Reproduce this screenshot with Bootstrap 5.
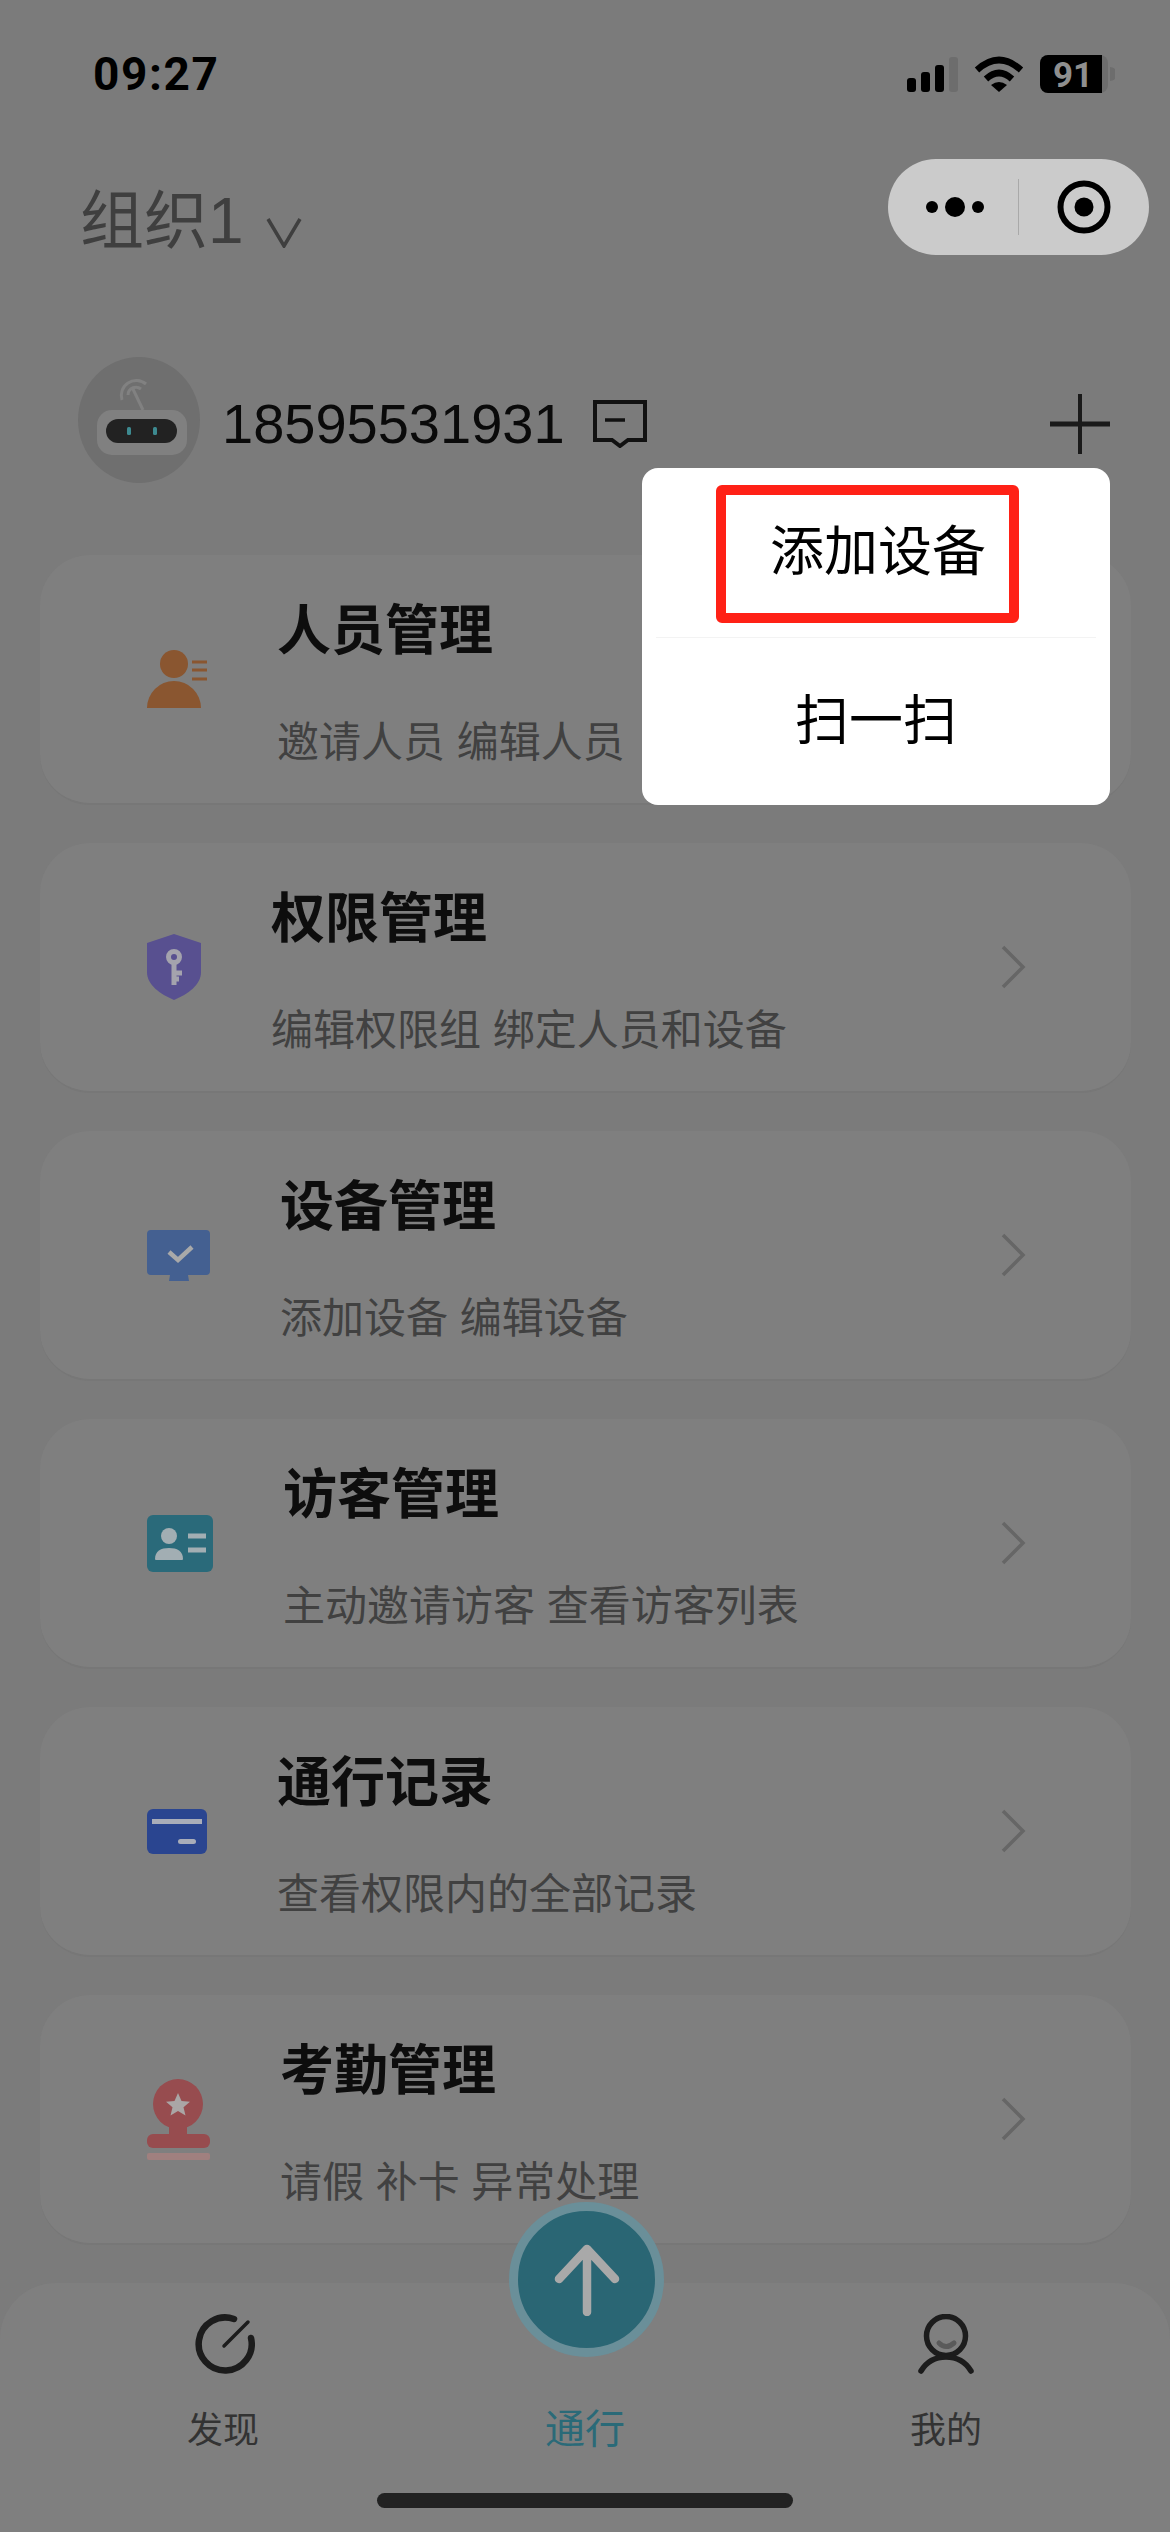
<!DOCTYPE html>
<html lang="zh-CN">
<head>
    <meta charset="UTF-8">
    <meta name="viewport" content="width=device-width, initial-scale=1.0">
    <title>通行</title>
    <link rel="stylesheet" href="https://cdn.jsdelivr.net/npm/bootstrap@5.3.0/dist/css/bootstrap.min.css">
    <style>
        html, body { width: 1170px; height: 2532px; overflow: hidden; }
        body {
            position: relative;
            background: #7b7b7b;
            color: #0a0a0a;
            font-family: "Liberation Sans", "Noto Sans CJK SC", sans-serif;
        }
        .status-row { height: 150px; padding: 51px 55px 0 93px; }
        .status-time { font: 700 46px/46px "Roboto", "Liberation Sans", sans-serif; letter-spacing: 1.6px; color: #000; }
        .status-icons { margin-top: -4px; }
        .org-row { height: 212px; padding: 9px 21px 0 80px; }
        .org-name { font-size: 64px; line-height: 96px; color: #3f3f3f; padding-top: 14px; }
        .org-caret { margin-left: 22px; margin-top: 22px; }
        .capsule { width: 261px; height: 96px; border-radius: 48px; background: #cbcbcb; }
        .capsule-half { width: 130px; }
        .capsule-line { width: 1px; height: 56px; background: #a9a9a9; }
        .profile-row { height: 124px; padding: 0 60px 0 78px; }
        .avatar-disc { width: 122px; height: 126px; border-radius: 50%; background: #6f6f6f; flex: none; margin-bottom: 8px; }
        .phone-text { font-size: 56px; margin-left: 22px; margin-right: 28px; }
        .menu-stack { padding: 69px 39px 0 40px; gap: 38px; }
        .menu-card {
            height: 250px;
            background: #7f7f7f;
            border-radius: 50px;
            border-bottom: 2px solid #777;
            padding: 0 105px 0 107px;
        }
        .menu-icon { flex: none; margin-right: 70px; display: block; }
        .menu-text { padding-top: 12px; }
        .menu-title { font-size: 54px; line-height: 60px; font-weight: 700; color: #0d0d0d; margin-top: -2px; }
        .menu-sub { font-size: 42px; line-height: 50px; color: #414141; margin-top: 57px; }
        .popup-menu {
            position: absolute; left: 642px; top: 468px;
            width: 468px; height: 337px;
            background: #fff; border-radius: 16px;
            font-size: 54px; color: #000;
        }
        .popup-first { height: 169px; }
        .popup-second { height: 168px; border-top: 1px solid #f3f3f3; margin: 0 14px; }
        .red-frame {
            position: absolute; left: 74px; top: 17px;
            width: 303px; height: 138px;
            border: 10px solid #ff2116; border-radius: 6px;
        }
        .tab-bar {
            position: absolute; left: 0; right: 0; top: 2283px; bottom: 0;
            background: #7f7f7f; border-radius: 56px 56px 0 0;
            padding: 31px 188px 0 187px;
        }
        .tab-cell { width: 72px; }
        .tab-text { font-size: 36px; line-height: 44px; color: #333; margin-top: 35px; white-space: nowrap; }
        .tab-icon { display: block; }
        .tab-shift { margin-left: 4px; }
        .tab-active { font-size: 40px; line-height: 48px; color: #2a6a78; position: absolute; left: 545px; top: 122px; }
        .pass-btn {
            position: absolute; left: 509px; top: 2202px;
            width: 155px; height: 155px; border-radius: 50%;
            background: #2a6674; border: 9px solid #6a8f99;
        }
        .home-bar {
            position: absolute; left: 377px; top: 2493px;
            width: 416px; height: 15px; border-radius: 8px; background: #222;
        }
    </style>
</head>
<body>

<div class="status-row d-flex justify-content-between align-items-start">
    <div class="status-time">09:27</div>
    <svg class="status-icons" width="208" height="52" viewBox="907 47 208 52">
        <rect x="907" y="78" width="9" height="14" rx="3" fill="#000"/>
        <rect x="921" y="72" width="9" height="20" rx="3" fill="#000"/>
        <rect x="935" y="65" width="9" height="27" rx="3" fill="#000"/>
        <rect x="949" y="57" width="9" height="35" rx="3" fill="#6d6d6d"/>
        <g fill="none" stroke="#000" stroke-width="6.5">
            <path d="M977 70Q999 50 1021 70"/>
            <path d="M986 79Q999 67 1012 79"/>
        </g>
        <path d="M991 85Q999 79 1007 85L999 92z" fill="#000"/>
        <rect x="1040" y="55" width="68" height="38" rx="8" fill="#6d6d6d"/>
        <path d="M1048 55h54v38h-54a8 8 0 0 1-8-8V63a8 8 0 0 1 8-8z" fill="#000"/>
        <path d="M1110 67a7 7 0 0 1 0 14z" fill="#6d6d6d"/>
        <text x="1073" y="87" text-anchor="middle" font-family="Roboto, sans-serif" font-weight="700" font-size="35" fill="#8f8f8f">91</text>
    </svg>
</div>

<div class="org-row d-flex justify-content-between align-items-start">
    <div class="org-name d-flex align-items-center">
        <span>组织1</span>
        <svg class="org-caret" width="36" height="32" viewBox="0 0 36 32"><path d="M2 3l16 27L34 3" fill="none" stroke="#3f3f3f" stroke-width="3.5"/></svg>
    </div>
    <div class="capsule d-flex align-items-center">
        <div class="capsule-half d-flex justify-content-center ps-1">
            <svg width="58" height="22" viewBox="0 0 58 22">
                <circle cx="6" cy="11" r="6" fill="#000"/><circle cx="29" cy="11" r="10" fill="#000"/><circle cx="52" cy="11" r="6" fill="#000"/>
            </svg>
        </div>
        <div class="capsule-line"></div>
        <div class="capsule-half d-flex justify-content-center">
            <svg width="54" height="54" viewBox="0 0 54 54">
                <circle cx="27" cy="27" r="23.500" fill="none" stroke="#000" stroke-width="6"/><circle cx="27" cy="27" r="9.500" fill="#000"/>
            </svg>
        </div>
    </div>
</div>

<div class="profile-row d-flex align-items-center">
    <div class="avatar-disc">
        <svg class="d-block" width="122" height="126" viewBox="-1 0 122 126">
            <g fill="none" stroke="#818181" stroke-width="3">
                <path d="M43 43a15 15 0 0 1 24-16"/><path d="M49 38a8 8 0 0 1 13-6"/><path d="M53 30l11 23"/>
            </g>
            <rect x="18" y="53" width="90" height="45" rx="15" fill="#808080"/>
            <rect x="27" y="62" width="71" height="24" rx="12" fill="#222"/>
            <rect x="48" y="70" width="4" height="8" rx="1.500" fill="#3d8a90"/>
            <rect x="74" y="70" width="4" height="8" rx="1.500" fill="#3d8a90"/>
        </svg>
    </div>
    <span class="phone-text">18595531931</span>
    <svg width="54" height="48" viewBox="0 0 54 48">
        <path d="M2 2h50v38H35l-8 6-8-6H2z" fill="none" stroke="#111" stroke-width="4"/>
        <path d="M12 20h20" stroke="#111" stroke-width="3.500"/>
    </svg>
    <svg class="ms-auto" width="60" height="60" viewBox="0 0 60 60">
        <path d="M30 0v60" stroke="#1a1a1a" stroke-width="4"/>
        <path d="M0 30h60" stroke="#1a1a1a" stroke-width="5"/>
    </svg>
</div>

<div class="menu-stack d-flex flex-column">
    <div class="menu-card d-flex align-items-center">
        <svg class="menu-icon" width="60" height="58" viewBox="0 0 60 58">
            <circle cx="27" cy="14" r="14" fill="#8a5630"/>
            <path d="M0 58a27 27 0 0 1 54 0z" fill="#8a5630"/>
            <path d="M45 12h15M45 20h15M45 29h15" stroke="#8a5630" stroke-width="3"/>
        </svg>
        <div class="flex-grow-1 menu-text">
            <div class="menu-title">人员管理</div>
            <div class="menu-sub">邀请人员 编辑人员</div>
        </div>
    </div>
    <div class="menu-card d-flex align-items-center">
        <svg class="menu-icon" width="54" height="66" viewBox="0 0 54 66">
            <path d="M27 0l27 9v29c0 13-13 22-27 28C13 60 0 51 0 38V9z" fill="#585090"/>
            <circle cx="27" cy="23" r="5.500" fill="none" stroke="#a4a3ad" stroke-width="5"/>
            <path d="M27 29v22M27 39h8M27 45h5" stroke="#a4a3ad" stroke-width="5"/>
        </svg>
        <div class="flex-grow-1 menu-text">
            <div class="menu-title">权限管理</div>
            <div class="menu-sub">编辑权限组 绑定人员和设备</div>
        </div>
        <svg width="27" height="44" viewBox="0 0 27 44"><path d="M4 2l20 20L4 42" fill="none" stroke="#666" stroke-width="3.500"/></svg>
    </div>
    <div class="menu-card d-flex align-items-center">
        <svg class="menu-icon" width="63" height="51" viewBox="0 0 63 51">
            <path d="M4 0h55a4 4 0 0 1 4 4v37a4 4 0 0 1-4 4H41l1 6H22l1-6H4a4 4 0 0 1-4-4V4a4 4 0 0 1 4-4z" fill="#446091"/>
            <path d="M22 22l9 8 14-13" fill="none" stroke="#a9a9a9" stroke-width="4.500"/>
        </svg>
        <div class="flex-grow-1 menu-text">
            <div class="menu-title">设备管理</div>
            <div class="menu-sub">添加设备 编辑设备</div>
        </div>
        <svg width="27" height="44" viewBox="0 0 27 44"><path d="M4 2l20 20L4 42" fill="none" stroke="#666" stroke-width="3.500"/></svg>
    </div>
    <div class="menu-card d-flex align-items-center">
        <svg class="menu-icon" width="66" height="57" viewBox="0 0 66 57">
            <rect width="66" height="57" rx="6" fill="#2a6a7a"/>
            <circle cx="22" cy="21" r="8" fill="#a2aeb3"/>
            <path d="M8 44c0-8 6-11 14-11s14 3 14 11a1 1 0 0 1-1 1H9a1 1 0 0 1-1-1z" fill="#a2aeb3"/>
            <path d="M41 21h18M41 35h18" stroke="#a2aeb3" stroke-width="5"/>
        </svg>
        <div class="flex-grow-1 menu-text">
            <div class="menu-title">访客管理</div>
            <div class="menu-sub">主动邀请访客 查看访客列表</div>
        </div>
        <svg width="27" height="44" viewBox="0 0 27 44"><path d="M4 2l20 20L4 42" fill="none" stroke="#666" stroke-width="3.500"/></svg>
    </div>
    <div class="menu-card d-flex align-items-center">
        <svg class="menu-icon" width="60" height="45" viewBox="0 0 60 45">
            <rect width="60" height="45" rx="6" fill="#2a4590"/>
            <rect x="5" y="10" width="50" height="5" fill="#a9adb9"/>
            <rect x="31" y="30" width="18" height="5" rx="2.500" fill="#a9adb9"/>
        </svg>
        <div class="flex-grow-1 menu-text">
            <div class="menu-title">通行记录</div>
            <div class="menu-sub">查看权限内的全部记录</div>
        </div>
        <svg width="27" height="44" viewBox="0 0 27 44"><path d="M4 2l20 20L4 42" fill="none" stroke="#666" stroke-width="3.500"/></svg>
    </div>
    <div class="menu-card d-flex align-items-center">
        <svg class="menu-icon" width="63" height="81" viewBox="0 0 63 81">
            <circle cx="31" cy="25" r="25" fill="#974c4f"/>
            <rect x="22" y="44" width="18" height="20" fill="#974c4f"/>
            <rect y="55" width="63" height="14" rx="6" fill="#974c4f"/>
            <rect y="74" width="63" height="7" rx="2" fill="#a0807f"/>
            <path d="M31 14l3.500 8 8.500 .7-6.500 5.500 2 8.300-7.500-4.500-7.500 4.500 2-8.300-6.500-5.500 8.500-.7z" fill="#aaa6a6"/>
        </svg>
        <div class="flex-grow-1 menu-text">
            <div class="menu-title">考勤管理</div>
            <div class="menu-sub">请假 补卡 异常处理</div>
        </div>
        <svg width="27" height="44" viewBox="0 0 27 44"><path d="M4 2l20 20L4 42" fill="none" stroke="#666" stroke-width="3.500"/></svg>
    </div>
</div>

<div class="tab-bar d-flex justify-content-between">
    <div class="tab-cell d-flex flex-column align-items-center">
        <svg class="tab-icon tab-shift" width="60" height="60" viewBox="0 0 60 60">
            <path d="M39 5A26.500 26.500 0 1 0 56 24" fill="none" stroke="#1c1c1c" stroke-width="6.500" stroke-linecap="round"/>
            <path d="M29 32L53 8" stroke="#1c1c1c" stroke-width="3.500" stroke-linecap="round"/>
        </svg>
        <div class="tab-text">发现</div>
    </div>
    <div class="tab-active">通行</div>
    <div class="tab-cell d-flex flex-column align-items-center">
        <svg class="tab-icon" width="60" height="60" viewBox="0 0 60 60">
            <circle cx="30" cy="22" r="19.500" fill="none" stroke="#1c1c1c" stroke-width="5.500"/>
            <path d="M5 57C11 47 20 43 30 43S49 47 55 57" fill="none" stroke="#1c1c1c" stroke-width="5.500" stroke-linecap="round"/>
            <path d="M23 29Q30 36 38 29" fill="none" stroke="#5a5a5a" stroke-width="5" stroke-linecap="round"/>
        </svg>
        <div class="tab-text">我的</div>
    </div>
</div>

<div class="pass-btn d-flex align-items-center justify-content-center">
    <svg width="66" height="72" viewBox="0 0 66 72">
        <path d="M33 5v63M5 35L33 5l28 30" fill="none" stroke="#a9a9a9" stroke-width="8.500" stroke-linecap="round" stroke-linejoin="round"/>
    </svg>
</div>

<div class="home-bar"></div>

<div class="popup-menu">
    <div class="popup-first d-flex align-items-center justify-content-center"><span class="ps-1">添加设备</span></div>
    <div class="popup-second d-flex align-items-center justify-content-center">扫一扫</div>
    <div class="red-frame"></div>
</div>

</body>
</html>
